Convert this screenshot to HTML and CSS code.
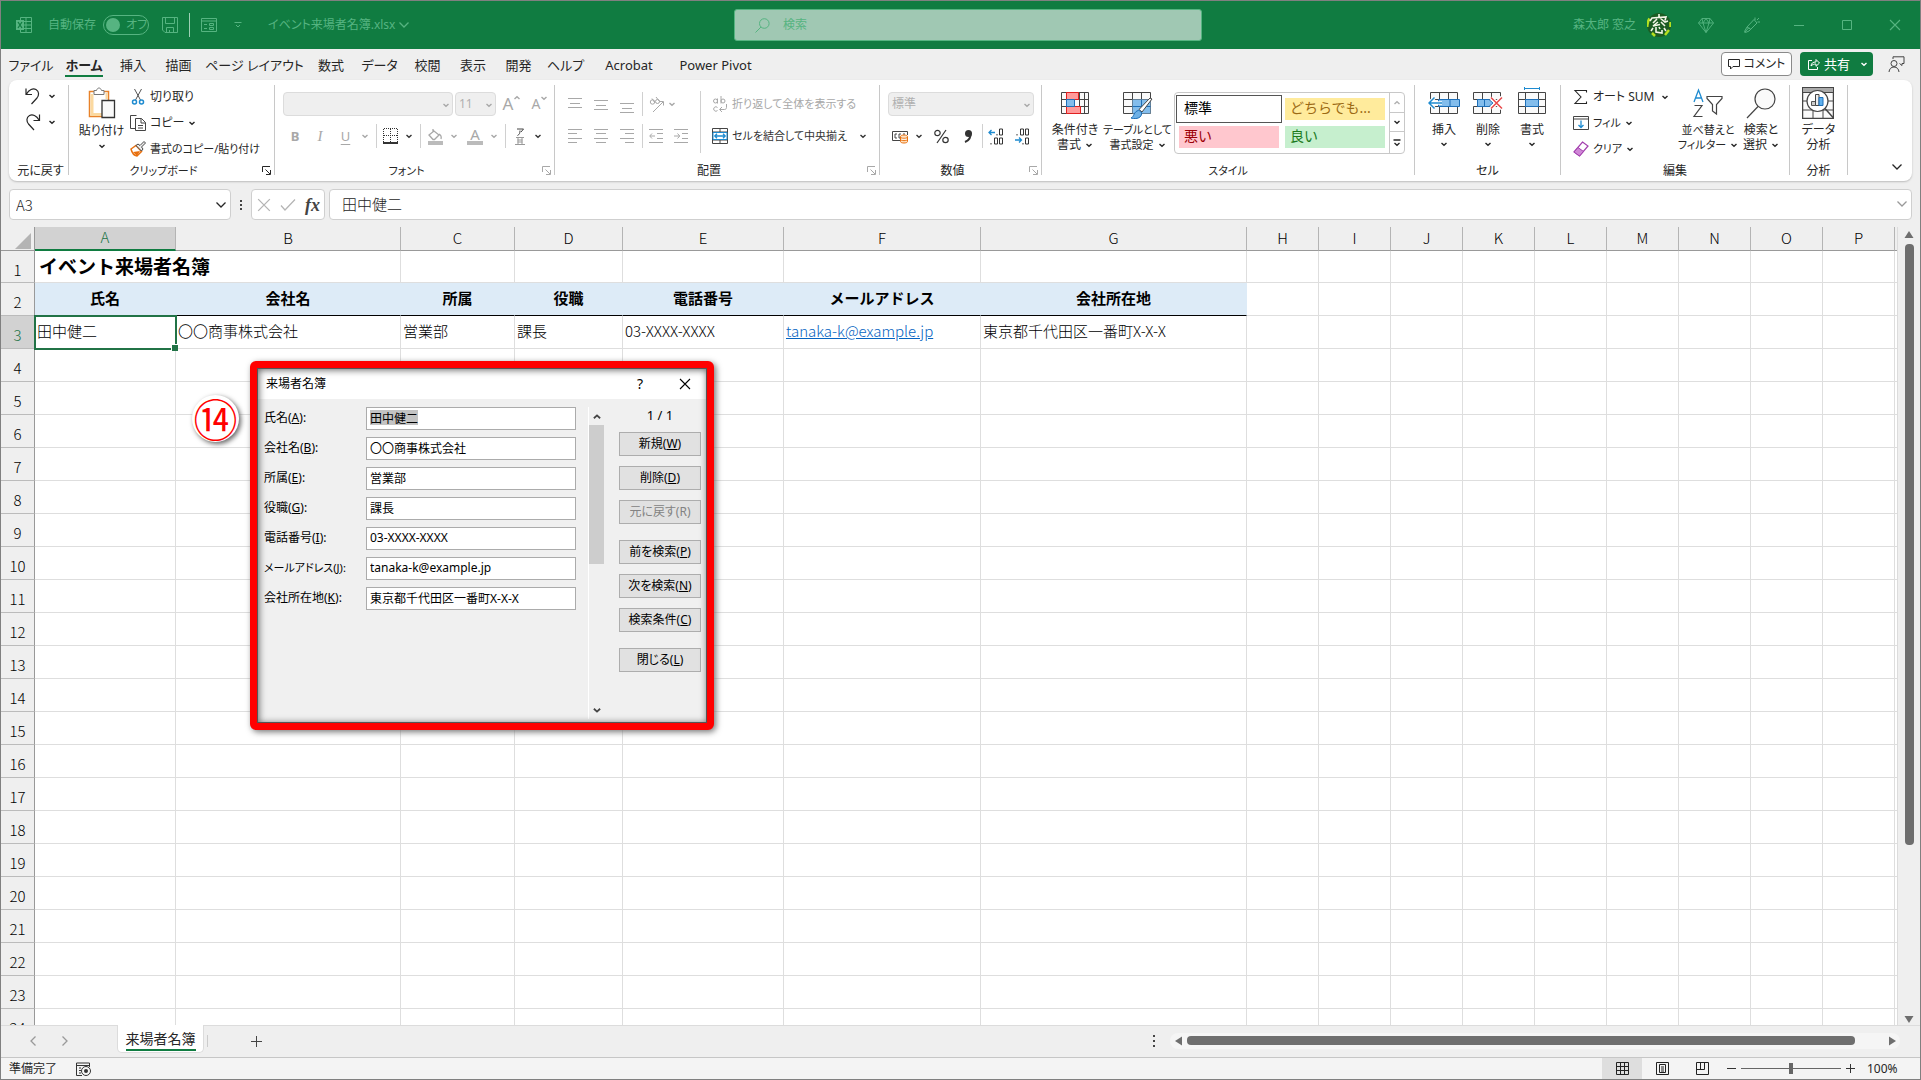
FILE: index.html
```html
<!DOCTYPE html>
<html lang="ja">
<head>
<meta charset="utf-8">
<title>イベント来場者名簿.xlsx - Excel</title>
<link rel="stylesheet" href="styles.css">
</head>
<body>
<svg class="defs" aria-hidden="true">
  <symbol id="chev" viewBox="0 0 8 8"><path d="M1.5 3 4 5.3 6.5 3" fill="none" stroke="currentColor" stroke-width="1.4"/></symbol>
  <symbol id="chev-lg" viewBox="0 0 12 12"><path d="M1.5 3.5 6 8l4.500-4.500" fill="none" stroke="currentColor" stroke-width="1.3"/></symbol>
  <symbol id="launch" viewBox="0 0 9 9"><path d="M.5 6V.5H8M3.500 3.500 8 8M8.500 4v4.500H4" fill="none" stroke="currentColor"/></symbol>
  <symbol id="cross" viewBox="0 0 12 12"><path d="m1 1 10 10M11 1 1 11" fill="none" stroke="currentColor" stroke-width="1.100"/></symbol>
</svg>
<div class="window">
  <header class="titlebar">
    <div class="title-left">
      <svg class="app-icon" width="16" height="16" viewBox="0 0 16 16"><path d="M4.500 3V.5h11v15h-11V13M10 .5v15M4.500 4.500h11M4.500 8h11M4.500 11.500h11" fill="none" stroke="currentColor"/><path d="M0 3h8v10H0z" fill="currentColor"/><path d="m2 5 4 6M6 5l-4 6" stroke="#107c41" stroke-width="1.300"/></svg>
      <label class="autosave">自動保存<span class="toggle"><input type="checkbox"><span>オフ</span></span></label>
      <button class="icon-btn save" aria-label="保存"><svg width="16" height="16" viewBox="0 0 16 16"><path d="M.5.5h15v15H3L.5 13zM3.500.5v6h9v-6M4.500 15.500v-5h7v5M7.500 15.500V13" fill="none" stroke="currentColor"/></svg></button>
      <span class="title-sep"></span>
      <button class="icon-btn form" aria-label="フォーム"><svg width="16" height="14" viewBox="0 0 16 14"><path d="M.5.5h15v13H.5zM.5 3h15M3 6.500h3M3 10.500h3M8.500 5.500h4v2h-4zM8.500 9.500h4v2h-4z" fill="none" stroke="currentColor"/></svg></button>
      <button class="icon-btn qat" aria-label="カスタマイズ"><svg width="8" height="8" viewBox="0 0 8 8"><path d="M.5 1.500h7M2 4l2 2 2-2" fill="none" stroke="currentColor"/></svg></button>
      <button class="doc-name">イベント来場者名簿.xlsx<svg width="12" height="12"><use href="#chev-lg"/></svg></button>
    </div>
    <label class="search"><svg width="15" height="15" viewBox="0 0 15 15"><circle cx="9.300" cy="5.500" r="4.800" fill="none" stroke="currentColor"/><path d="M6 9 .5 14.500" stroke="currentColor" fill="none"/></svg><input type="search" placeholder="検索" aria-label="検索"></label>
    <div class="title-right">
      <span>森太郎 窓之</span>
      <svg class="avatar" width="24" height="24" viewBox="0 0 24 24"><circle cx="12" cy="12" r="12" fill="#1c5c23"/><path d="M2.500 5.500C1 8 0 11 .5 14M5 20l3 3M18 22l4-5M23.500 9v5" stroke="#b4e020" stroke-width="2.500" fill="none"/><path d="M12 1v3M3 8l2-3 14-1-1 3.500M10 6l-4 4M13 5l5 4 3-1M11 9l-5 4 7-1.500M14 9l4 4M6 15l-2 3M9 14v5l6 1v-3M12 14l1 2M17 15l2 3" stroke="#f2f5e6" stroke-width="1.600" fill="none"/></svg>
      <button class="icon-btn gem" aria-label="プレミアム"><svg width="16" height="15" viewBox="0 0 16 15"><path d="M4 .5h8l3.500 4.500L8 14.500.5 5zM.5 5h15M5 5l3 9.500L11 5M4 .5 5 5l3-4.500L11 5l1-4.500" fill="none" stroke="currentColor" stroke-width=".9"/></svg></button>
      <button class="icon-btn pen" aria-label="新機能"><svg width="16" height="16" viewBox="0 0 16 16"><path d="M10 2.500 13 6 5 14l-3.500 1.500H.8L.5 14.500 3 10zM3 10l4 2.500M1 15l4-4.500M11 3V.5M13 3l2-2M13.500 5H16" fill="none" stroke="currentColor" stroke-width="1"/></svg></button>
      <button class="icon-btn cap" aria-label="最小化"><svg width="12" height="12"><path d="M1 6.500h10" stroke="currentColor"/></svg></button>
      <button class="icon-btn cap" aria-label="最大化"><svg width="12" height="12"><path d="M1.500 1.500h9v9h-9z" fill="none" stroke="currentColor"/></svg></button>
      <button class="icon-btn cap" aria-label="閉じる"><svg width="12" height="12"><use href="#cross"/></svg></button>
    </div>
  </header>

  <nav class="tabs">
    <div class="tab-list">
      <button>ファイル</button><button class="active"><span>ホーム</span></button><button>挿入</button><button>描画</button><button>ページ レイアウト</button><button>数式</button><button>データ</button><button>校閲</button><button>表示</button><button>開発</button><button>ヘルプ</button><button>Acrobat</button><button>Power Pivot</button>
    </div>
    <div class="tab-actions">
      <button class="comment"><svg width="12" height="12" viewBox="0 0 12 12"><path d="M.5 1.500h11v7H5L2.500 11V8.500h-2z" fill="none" stroke="currentColor"/></svg>コメント</button>
      <button class="share"><svg width="12" height="12" viewBox="0 0 12 12"><path d="M4 2.500H.5v9h9V9M3 8c.3-3 2-4 5-4V1.500L11.500 5 8 8.300V6C6 6 4.500 6.500 3 8z" fill="none" stroke="currentColor"/></svg>共有<svg class="end" width="8" height="8"><use href="#chev"/></svg></button>
      <button class="people" aria-label="Teams"><svg width="17" height="17" viewBox="0 0 17 17"><circle cx="6" cy="7.500" r="3" fill="none" stroke="currentColor"/><path d="M1 16c.3-3 2-5 5-5s4.700 2 5 5M5 3V.8h11v6.700h-2v2l-2.500-2" fill="none" stroke="currentColor"/></svg></button>
    </div>
  </nav>

  <section class="ribbon">
    <div class="group g-undo">
      <div class="body undo">
        <button aria-label="元に戻す"><svg width="16" height="18" viewBox="0 0 16 18"><path d="M1 1.500v6h6M1.500 7C4 2.500 8 1 11 2.500c3.500 2 3 6 1 8.500L6.500 17" fill="none" stroke="currentColor" stroke-width="1.200"/></svg><svg width="8" height="8"><use href="#chev"/></svg></button>
        <button aria-label="やり直し"><svg width="16" height="18" viewBox="0 0 16 18"><path d="M14.500 1.500v6h-6M14 7C11.500 2.500 7.500 1 4.500 2.500c-3.500 2-3 6-1 8.500L9 17" fill="none" stroke="currentColor" stroke-width="1.200"/></svg><svg width="8" height="8"><use href="#chev"/></svg></button>
      </div>
      <div class="caption">元に戻す</div>
    </div>
    <div class="group g-clip">
      <div class="body clip">
        <button class="big"><svg width="28" height="32" viewBox="0 0 28 32"><path d="M1.500 4.500h19v25h-19z" fill="#fff" stroke="#e8822a" stroke-width="1.500"/><path d="M4 7v20.500h10" fill="none" stroke="#fbd9a0" stroke-width="3"/><path d="M18.500 6v6" stroke="#fbd9a0" stroke-width="2"/><path d="M6 7.500v-4h2.500C9 1.800 10 1 11 1s2 .8 2.500 2.500H16v4z" fill="#fff" stroke="#777"/><path d="M14 13.500h12.500v17H14z" fill="#fafafa" stroke="#333" stroke-width="1.300"/></svg>貼り付け<svg width="8" height="8"><use href="#chev"/></svg></button>
        <div class="stack">
          <button><svg width="16" height="18" viewBox="0 0 16 18"><path d="M4.500 1l6 11M11.500 1l-6 11" stroke="#555" fill="none"/><circle cx="4.500" cy="14" r="2" fill="none" stroke="#1e8bd0" stroke-width="1.500"/><circle cx="11.500" cy="14" r="2" fill="none" stroke="#1e8bd0" stroke-width="1.500"/></svg>切り取り</button>
          <button class="dd"><svg width="16" height="16" viewBox="0 0 16 16"><path d="M5 13.500H.5V.5h6M5.500 3.500h6l4 4v8h-10zM11 3.500V8h4.500M8 10.500h5M8 13h5" fill="none" stroke="#444"/></svg>コピー<svg class="end" width="8" height="8"><use href="#chev"/></svg></button>
          <button class="snug"><svg width="16" height="16" viewBox="0 0 16 16"><path d="m1 8 5-3.500 5.500 6L7 15c-3-.5-5-3-6-7z" fill="#fff" stroke="#e8700f" stroke-width="1.500"/><path d="m3 11 7-1-3 5z" fill="#e8700f"/><path d="m6 4.500 2-1.500 2 1.500 4-4 1.500 1.500-4 4 1.500 2-1.500 2z" fill="#eee" stroke="#444"/></svg>書式のコピー/貼り付け</button>
        </div>
      </div>
      <div class="caption snug">クリップボード</div><button class="launcher" aria-label="クリップボードの設定"><svg width="9" height="9"><use href="#launch"/></svg></button>
    </div>
    <div class="group g-font off">
      <div class="body rows">
        <div class="row font1">
          <span class="combo"><select aria-label="フォント名" disabled><option></option></select><svg width="8" height="8"><use href="#chev"/></svg></span>
          <span class="combo"><select aria-label="サイズ" disabled><option>11</option></select><svg width="8" height="8"><use href="#chev"/></svg></span>
          <button class="lt-big" aria-label="拡大">A<svg class="up" width="8" height="8"><use href="#chev"/></svg></button><button class="lt-mid" aria-label="縮小">A<svg width="8" height="8"><use href="#chev"/></svg></button>
        </div>
        <div class="row font2">
          <button class="b">B</button><button class="i">I</button><button class="u">U</button><svg width="8" height="8"><use href="#chev"/></svg><i></i>
          <button class="on" aria-label="罫線"><svg width="15" height="16" viewBox="0 0 15 16"><path d="M.5 1v13M14.500 1v13M7.500 1v13M1 .5h13M1 7.500h13" fill="none" stroke="currentColor" stroke-dasharray="1 1"/><path d="M0 15h15" stroke="currentColor" stroke-width="2"/></svg></button><svg class="on" width="8" height="8"><use href="#chev"/></svg><i></i>
          <button aria-label="塗りつぶし"><svg width="16" height="17" viewBox="0 0 16 17"><path d="M6 1v4M2 7l5-4 5 4-4.500 4.500H6zM12 6c2 1 2.500 3 2 5" fill="none" stroke="currentColor" stroke-width="1.300"/><path d="M1 13h15v4H1z" fill="#bbb"/></svg></button><svg width="8" height="8"><use href="#chev"/></svg>
          <button class="fc" aria-label="フォントの色">A</button><svg width="8" height="8"><use href="#chev"/></svg><i></i>
          <button class="ruby on" aria-label="ふりがな"><svg width="10" height="17" viewBox="0 0 10 17"><path d="M2 1h6.500L6 4M5 2.500C5 5 4.500 6.500 2.500 7.500" fill="none" stroke="#444"/><path d="M1 9.500h8M2.500 12h5M2.500 14h5M0 16.500h10M3 9v7M7 9v7" fill="none" stroke="#999"/></svg></button><svg class="on" width="8" height="8"><use href="#chev"/></svg>
        </div>
      </div>
      <div class="caption snug">フォント</div><button class="launcher" aria-label="フォントの設定"><svg width="9" height="9"><use href="#launch"/></svg></button>
    </div>
    <div class="group g-align off">
      <div class="body align">
        <div class="rows">
          <div class="row al">
            <button aria-label="上揃え"><svg width="14" height="18"><path d="M0 3.500h14M2 8.500h10M0 12.500h14" stroke="currentColor"/></svg></button>
            <button aria-label="上下中央揃え"><svg width="14" height="18"><path d="M0 5.500h14M2 10.500h10M0 14.500h14" stroke="currentColor"/></svg></button>
            <button aria-label="下揃え"><svg width="14" height="18"><path d="M0 8.500h14M2 13.500h10M0 17.500h14" stroke="currentColor"/></svg></button><i></i>
            <button aria-label="方向"><svg width="17" height="17" viewBox="0 0 17 17"><circle cx="4.500" cy="6" r="2.200" fill="none" stroke="currentColor"/><path d="M4 2.500 7 7M8 1l4 5M5 16 15 6M11.500 5.500h4v4" fill="none" stroke="currentColor"/><circle cx="9.500" cy="5.500" r="2" fill="none" stroke="currentColor"/></svg></button><svg width="8" height="8"><use href="#chev"/></svg>
          </div>
          <div class="row al">
            <button aria-label="左揃え"><svg width="14" height="14"><path d="M0 .5h14M0 4.500h9M0 9.500h14M0 13.500h9" stroke="currentColor"/></svg></button>
            <button aria-label="中央揃え"><svg width="14" height="14"><path d="M0 .5h14M2 4.500h10M0 9.500h14M2 13.500h10" stroke="currentColor"/></svg></button>
            <button aria-label="右揃え"><svg width="14" height="14"><path d="M0 .5h14M5 4.500h9M0 9.500h14M5 13.500h9" stroke="currentColor"/></svg></button><i></i>
            <button aria-label="インデントを減らす"><svg width="14" height="14"><path d="M0 .5h14M8 4.500h6M8 9.500h6M0 13.500h14M6 7H1M3 4.500.7 7 3 9.500" fill="none" stroke="currentColor"/></svg></button>
            <button aria-label="インデントを増やす"><svg width="14" height="14"><path d="M0 .5h14M8 4.500h6M8 9.500h6M0 13.500h14M0 7h5M3.500 4.500 5.800 7 3.500 9.500" fill="none" stroke="currentColor"/></svg></button>
          </div>
        </div>
        <div class="rows wraps">
          <button class="row snug"><svg width="16" height="17" viewBox="0 0 16 17"><circle cx="3.500" cy="5" r="2" fill="none" stroke="currentColor"/><path d="M5.500 2.500v5M9 0v7.500" stroke="currentColor"/><circle cx="11" cy="5" r="2" fill="none" stroke="currentColor"/><path d="M5.500 11.500a2.200 2.200 0 1 0 0 3M14.500 8v3.500c0 1-.7 2-2 2H8M10 11l-2.500 2.500L10 16" fill="none" stroke="currentColor"/></svg>折り返して全体を表示する</button>
          <button class="row snug on"><svg width="16" height="16" viewBox="0 0 16 16"><path d="M.5.5h15v15H.5zM.5 4h15M.5 12h15M8 .5V4M8 12v3.500" fill="none" stroke="#444"/><path d="M1 4.500h14v7H1z" fill="#fff" stroke="#1e8bd0"/><path d="M3 8h10M5 5.800 2.800 8 5 10.200M11 5.800 13.200 8 11 10.200" fill="none" stroke="#1e8bd0" stroke-width="1.300"/></svg>セルを結合して中央揃え<svg class="end" width="8" height="8"><use href="#chev"/></svg></button>
        </div>
      </div>
      <div class="caption">配置</div><button class="launcher" aria-label="配置の設定"><svg width="9" height="9"><use href="#launch"/></svg></button>
    </div>
    <div class="group g-num off">
      <div class="body rows">
        <div class="row"><span class="combo wide"><select aria-label="表示形式" disabled><option>標準</option></select><svg width="8" height="8"><use href="#chev"/></svg></span></div>
        <div class="row num2 on">
          <button aria-label="通貨"><svg width="17" height="15" viewBox="0 0 17 15"><path d="M8 11.500H.5v-9h15V6M5 5H3v4h2M8.500 9H7V5h2M11 5h2" fill="none" stroke="#444"/><path d="M8.500 7.500c0-2 7-2 7 0v5c0 2-7 2-7 0zM8.500 8c0 1.500 7 1.500 7 0M8.500 10.500c0 1.500 7 1.500 7 0" fill="#fde3c4" stroke="#e8700f"/></svg></button><svg width="8" height="8"><use href="#chev"/></svg>
          <button aria-label="パーセント"><svg width="15" height="15" viewBox="0 0 15 15"><circle cx="3.500" cy="4" r="2.700" fill="none" stroke="currentColor" stroke-width="1.200"/><circle cx="11.500" cy="11" r="2.700" fill="none" stroke="currentColor" stroke-width="1.200"/><path d="M12 1 3 14" stroke="currentColor" stroke-width="1.200"/></svg></button>
          <button aria-label="桁区切り"><svg width="9" height="13" viewBox="0 0 9 13"><circle cx="4.500" cy="3.500" r="3.500" fill="currentColor"/><path d="M6.500 3C7 8 5 10.500 1 12" fill="none" stroke="currentColor" stroke-width="2"/></svg></button><i></i>
          <button aria-label="小数点以下を増やす"><svg width="16" height="17" viewBox="0 0 16 17"><path d="M7 4.500H1M3.500 2 1 4.500 3.500 7" fill="none" stroke="#1e8bd0" stroke-width="1.300"/><path d="M11.500 1h3v6h-3zM6.500 10h3v6h-3zM11.500 10h3v6h-3zM3 15v1.500M9 6v1.500" fill="none" stroke="currentColor"/></svg></button>
          <button aria-label="小数点以下を減らす"><svg width="16" height="17" viewBox="0 0 16 17"><path d="M1 12h6M5 9.500 7.500 12 5 14.500" fill="none" stroke="#1e8bd0" stroke-width="1.300"/><path d="M6.500 1h3v6h-3zM11.500 1h3v6h-3zM11.500 10h3v6h-3zM3 6v1.500M9 15v1.500" fill="none" stroke="currentColor"/></svg></button>
        </div>
      </div>
      <div class="caption">数値</div><button class="launcher" aria-label="表示形式の設定"><svg width="9" height="9"><use href="#launch"/></svg></button>
    </div>
    <div class="group g-style">
      <div class="body styles">
        <button class="big"><svg width="28" height="32" viewBox="0 0 28 32"><path d="M.5 5.500h27v21H.5zM5.500 5.500v21M18.500 5.500v21M23.500 5.500v21M.5 12.500h27M.5 19.500h27" fill="#fafafa" stroke="#444"/><path d="M5.500 5.500h12v7h-12zM5.500 19.500h14v7h-14z" fill="#ff9a9a" stroke="#e02020"/><path d="M5.500 12.500h8v7h-8z" fill="#83bdec" stroke="#1e6fb8"/></svg><span>条件付き<br>書式<svg width="8" height="8"><use href="#chev"/></svg></span></button>
        <button class="big"><svg width="30" height="32" viewBox="0 0 30 32"><path d="M.5 5.500h27v21H.5zM9.500 5.500v21M18.500 5.500v21M.5 12.500h27M.5 19.500h27" fill="#fafafa" stroke="#444"/><path d="M9.500 12.500h18v14h-18z" fill="#83bdec"/><path d="M9.500 19.500h18M18.500 12.500v14" stroke="#1e6fb8"/><path d="m29 12-10 13-3-2.500L27 11z" fill="#fff" stroke="#444"/><path d="M8 31c3-1 3-7 7.500-7.500 3.500.5 4 4 1.500 6.500-2 1.800-6 2-9 1z" fill="#6db0e6" stroke="#1e6fb8"/></svg><span class="snug">テーブルとして<br>書式設定<svg width="8" height="8"><use href="#chev"/></svg></span></button>
        <div class="gallery">
          <div class="swatches"><button class="sw normal">標準</button><button class="sw neutral">どちらでも...</button><button class="sw bad">悪い</button><button class="sw good">良い</button></div>
          <div class="gal-scroll"><button class="dim" aria-label="前の行"><svg class="up" width="8" height="8"><use href="#chev"/></svg></button><button aria-label="次の行"><svg width="8" height="8"><use href="#chev"/></svg></button><button aria-label="その他"><svg width="8" height="8" viewBox="0 0 8 8"><path d="M.5 1h7M1.500 4 4 6.300 6.500 4" fill="none" stroke="currentColor" stroke-width="1.300"/></svg></button></div>
        </div>
      </div>
      <div class="caption snug">スタイル</div>
    </div>
    <div class="group g-cell">
      <div class="body cells">
        <button class="big"><svg width="32" height="32" viewBox="0 0 32 32"><path d="M2.500 5.500h27v21h-27zM11.500 5.500v21M20.500 5.500v21M2.500 12.500h27M2.500 19.500h27" fill="#fafafa" stroke="#444"/><path d="M10.500 12.500h21v7h-21zM22 12.500v7" fill="#83bdec" stroke="#1e6fb8"/><path d="M14 16H2M6.500 10.500 1 16l5.500 5.500" fill="none" stroke="#fff" stroke-width="3.500"/><path d="M14 16H2M6.500 10.500 1 16l5.500 5.500" fill="none" stroke="#1e8bd0" stroke-width="1.500"/></svg>挿入<svg width="8" height="8"><use href="#chev"/></svg></button>
        <button class="big"><svg width="30" height="32" viewBox="0 0 30 32"><path d="M.5 12.500v-7h27v7zM.5 26.500v-7h27v7zM9.500 5.500v7M18.500 5.500v7M9.500 19.500v7M18.500 19.500v7" fill="#fafafa" stroke="#444"/><path d="M4.500 12.500H16l4 3.500-4 3.500H4.500zM11.500 12.500v7" fill="#83bdec" stroke="#1e6fb8"/><path d="m18 10.500 11 11M29 10.500l-11 11" stroke="#fff" stroke-width="4"/><path d="m18 10.500 11 11M29 10.500l-11 11" stroke="#e8484a" stroke-width="1.500"/></svg>削除<svg width="8" height="8"><use href="#chev"/></svg></button>
        <button class="big"><svg width="28" height="32" viewBox="0 0 28 32"><path d="M.5 5.500h27v21H.5zM7.500 5.500v21M20.500 5.500v21M.5 12.500h27M.5 19.500h27" fill="#fafafa" stroke="#444"/><path d="M7.500 12.500h13v7h-13z" fill="#83bdec" stroke="#1e6fb8"/><path d="M6.500 0v3M21.500 0v3M6.500 1.500h15" stroke="#1e8bd0"/></svg>書式<svg width="8" height="8"><use href="#chev"/></svg></button>
      </div>
      <div class="caption">セル</div>
    </div>
    <div class="group g-edit">
      <div class="body edit">
        <div class="stack">
          <button class="dd"><svg width="16" height="16" viewBox="0 0 16 16"><path d="M13.500 3.500v-2H2L8 8l-6 6.500h11.500v-2" fill="none" stroke="currentColor" stroke-width="1.100"/></svg>オート SUM<svg class="end" width="8" height="8"><use href="#chev"/></svg></button>
          <button class="snug"><svg width="16" height="14" viewBox="0 0 16 14"><path d="M.5.5h15v13H.5zM.5 3h15" fill="none" stroke="#444"/><path d="M8 4.500v7M5.500 9 8 11.500 10.500 9" fill="none" stroke="#1e8bd0" stroke-width="1.300"/></svg>フィル<svg width="8" height="8"><use href="#chev"/></svg></button>
          <button class="snug"><svg width="16" height="16" viewBox="0 0 16 16"><path d="m9.500 1 5.500 4-8.500 10L1 11z" fill="#fff" stroke="#a33fae" stroke-width="1.200"/><path d="m5 6.500 5.500 4-4 4.500L1 11z" fill="#cf86d6" stroke="#a33fae"/></svg>クリア<svg width="8" height="8"><use href="#chev"/></svg></button>
        </div>
        <button class="big"><svg width="32" height="32" viewBox="0 0 32 32"><path d="m2 15 4.500-12L11 15M3.500 11h6" fill="none" stroke="#1e8bd0" stroke-width="1.300"/><path d="M2.500 18.500H10L2 29.500h8.500M15 9.500h15v2l-5.500 6V27l-4-3v-6.500L15 11.500z" fill="none" stroke="#444" stroke-width="1.200"/></svg><span class="snug">並べ替えと<br>フィルター<svg width="8" height="8"><use href="#chev"/></svg></span></button>
        <button class="big"><svg width="30" height="32" viewBox="0 0 30 32"><circle cx="19" cy="12" r="10" fill="#fafafa" stroke="#444" stroke-width="1.200"/><path d="M12 19.500 1 31" stroke="#444" stroke-width="1.200"/></svg><span>検索と<br>選択<svg width="8" height="8"><use href="#chev"/></svg></span></button>
      </div>
      <div class="caption">編集</div>
    </div>
    <div class="group g-data">
      <div class="body data">
        <button class="big"><svg width="32" height="32" viewBox="0 0 32 32"><path d="M.5.5h31v31H.5z" fill="#fafafa" stroke="#444" stroke-width="1.500"/><path d="M1 1h30v4H1z" fill="#aaa"/><path d="M.5 5.500h31M.5 14h31M.5 23h31M11 23v8M21 23v8" stroke="#444"/><circle cx="15.500" cy="14" r="10.500" fill="#fff" stroke="#444" stroke-width="1.200"/><path d="m23 21.500 8.500 9.500" stroke="#444" stroke-width="1.500"/><path d="M9.500 14.500h4v4h-4z" fill="#ccc" stroke="#555"/><path d="M13.500 7.500h3.500v11h-3.500z" fill="#eee" stroke="#444"/><path d="M17 10.500h4v8h-4z" fill="#5fb0ee" stroke="#1e6fb8"/></svg><span>データ<br>分析</span></button>
      </div>
      <div class="caption">分析</div>
    </div>
    <button class="collapse" aria-label="リボンを折りたたむ"><svg width="12" height="12"><use href="#chev-lg"/></svg></button>
  </section>

  <div class="formula-row">
    <div class="name-box"><input value="A3" aria-label="名前ボックス"><svg width="12" height="12"><use href="#chev-lg"/></svg></div>
    <span class="dots"><i></i><i></i><i></i></span>
    <div class="fx"><svg width="14" height="14" viewBox="0 0 12 12"><use href="#cross"/></svg><svg width="16" height="14" viewBox="0 0 16 14"><path d="m1 7.500 4 4.500L15 1.500" fill="none" stroke="currentColor" stroke-width="1.200"/></svg><button aria-label="関数の挿入">fx</button></div>
    <div class="formula"><input value="田中健二" aria-label="数式バー"><svg width="12" height="12"><use href="#chev-lg"/></svg></div>
  </div>

  <main class="sheet-area">
    <div class="sheet">
      <table>
        <colgroup><col class="c-head"><col class="c-a"><col class="c-b"><col class="c-c"><col class="c-d"><col class="c-e"><col class="c-f"><col class="c-g"><col span="9" class="c-std"><col class="c-std"></colgroup>
        <thead><tr><th class="corner"><svg width="16" height="16"><path d="M16 0v16H0z" fill="#b4b4b4"/></svg></th><th class="sel">A</th><th>B</th><th>C</th><th>D</th><th>E</th><th>F</th><th>G</th><th>H</th><th>I</th><th>J</th><th>K</th><th>L</th><th>M</th><th>N</th><th>O</th><th>P</th><th></th></tr></thead>
        <tbody id="rows">
          <tr><th>1</th><td class="title" colspan="2">イベント来場者名簿</td><td></td><td></td><td></td><td></td><td></td><td></td><td></td><td></td><td></td><td></td><td></td><td></td><td></td><td></td><td></td></tr>
          <tr class="heads"><th>2</th><td>氏名</td><td>会社名</td><td>所属</td><td>役職</td><td>電話番号</td><td>メールアドレス</td><td>会社所在地</td><td></td><td></td><td></td><td></td><td></td><td></td><td></td><td></td><td></td><td></td></tr>
          <tr><th class="sel">3</th><td class="cursor">田中健二</td><td>〇〇商事株式会社</td><td>営業部</td><td>課長</td><td>03-XXXX-XXXX</td><td><a href="mailto:tanaka-k@example.jp">tanaka-k@example.jp</a></td><td>東京都千代田区一番町X-X-X</td><td></td><td></td><td></td><td></td><td></td><td></td><td></td><td></td><td></td><td></td></tr>
        </tbody>
      </table>
    </div>
    <div class="vscroll"><svg width="10" height="8"><path d="M5 0l4.500 7h-9z" fill="#6e6e6e"/></svg><div class="vthumb"></div><div class="vrest"></div><svg width="10" height="8"><path d="M5 8 .5 1h9z" fill="#6e6e6e"/></svg></div>

    <form class="dialog">
      <div class="dlg-title"><span>来場者名簿</span><button type="button" class="help" aria-label="ヘルプ">?</button><button type="button" aria-label="閉じる"><svg width="12" height="12"><use href="#cross"/></svg></button></div>
      <div class="dlg-body">
        <div class="fields">
          <label for="fa"><span>氏名(<u>A</u>):</span></label><input id="fa" class="picked" value="田中健二">
          <label for="fb"><span>会社名(<u>B</u>):</span></label><input id="fb" value="〇〇商事株式会社">
          <label for="fe"><span>所属(<u>E</u>):</span></label><input id="fe" value="営業部">
          <label for="fg"><span>役職(<u>G</u>):</span></label><input id="fg" value="課長">
          <label for="fi"><span>電話番号(<u>I</u>):</span></label><input id="fi" value="03-XXXX-XXXX">
          <label for="fj" class="snug"><span>メールアドレス(<u>J</u>):</span></label><input id="fj" value="tanaka-k@example.jp">
          <label for="fk"><span>会社所在地(<u>K</u>):</span></label><input id="fk" value="東京都千代田区一番町X-X-X">
        </div>
        <div class="dlg-scroll"><svg class="up" width="10" height="10"><use href="#chev"/></svg><div class="dlg-thumb"></div><svg class="down" width="10" height="10"><use href="#chev"/></svg></div>
        <div class="dlg-buttons">
          <span class="count">1 / 1</span>
          <div class="btns"><button type="button">新規(<u>W</u>)</button><button type="button">削除(<u>D</u>)</button><button type="button" disabled>元に戻す(R)</button></div>
          <div class="btns"><button type="button">前を検索(<u>P</u>)</button><button type="button">次を検索(<u>N</u>)</button><button type="button">検索条件(<u>C</u>)</button></div>
          <div class="btns"><button type="button">閉じる(<u>L</u>)</button></div>
        </div>
      </div>
    </form>
    <div class="step">⑭</div>
  </main>

  <div class="sheet-tabs">
    <button class="arrow" aria-label="前のシート"><svg class="left" width="12" height="12"><use href="#chev-lg"/></svg></button>
    <button class="arrow" aria-label="次のシート"><svg class="right" width="12" height="12"><use href="#chev-lg"/></svg></button>
    <button class="sheet-tab"><span>来場者名簿</span></button>
    <button class="add" aria-label="新しいシート"><svg width="12" height="12"><path d="M6.500 1v11M1 6.500h11" stroke="#444"/></svg></button>
    <span class="dots"><i></i><i></i><i></i></span>
    <div class="hscroll"><svg width="8" height="10"><path d="M0 5l7-4.500v9z" fill="#6e6e6e"/></svg><div class="hthumb"></div><div class="hrest"></div><svg width="8" height="10"><path d="M8 5 1 .5v9z" fill="#6e6e6e"/></svg></div>
  </div>
  <footer class="status">
    <span>準備完了</span>
    <svg class="macro" width="15" height="14" viewBox="0 0 15 14"><path d="M6 13.500H.5V1h13v4M.5 3.500h13M3 6h2M3 8.500h2M3 11h2" fill="none" stroke="#333"/><circle cx="10" cy="9" r="4.500" fill="#f4f4f4" stroke="#333"/><circle cx="10" cy="9" r="2" fill="#333"/></svg>
    <div class="views">
      <button class="current" aria-label="標準"><svg width="13" height="13"><path d="M.5.5h12v12H.5zM4.500 0v13M8.500 0v13M0 4.500h13M0 8.500h13" fill="none" stroke="#222"/></svg></button>
      <button aria-label="ページ レイアウト"><svg width="13" height="13"><path d="M.5.5h12v12H.5zM3.500 2.500h6v8h-6zM5 5h3M5 7h3M5 9h3" fill="none" stroke="#222"/></svg></button>
      <button aria-label="改ページ プレビュー"><svg width="13" height="13"><path d="M.5.5h12v12H.5zM.5 7.500h8V.5M4.500.5v7" fill="none" stroke="#222"/></svg></button>
    </div>
    <div class="zoom"><button aria-label="縮小"><svg width="9" height="9"><path d="M0 4.500h9" stroke="#333"/></svg></button><input type="range" min="0" max="100" value="50" aria-label="ズーム"><button aria-label="拡大"><svg width="9" height="9"><path d="M0 4.500h9M4.500 0v9" stroke="#333"/></svg></button></div>
    <span class="pct">100%</span>
  </footer>
</div>
<script src="script.js"></script>
</body>
</html>
```
FILE: styles.css
```css
* { box-sizing: border-box; }
body { margin: 0; font-family: "Noto Sans", "Noto Sans CJK JP", sans-serif; font-size: 12px; line-height: 16px; color: #262626; font-feature-settings: "palt"; }
button, input, select { font: inherit; font-feature-settings: inherit; color: inherit; margin: 0; padding: 0; border: 0; background: none; }
button { cursor: pointer; white-space: nowrap; }
input { min-width: 0; outline: 0; }
svg { flex: none; display: block; }
.defs { position: absolute; width: 0; height: 0; }
.snug { font-size: 11px; }
.window { height: 100vh; display: flex; flex-direction: column; border: 1px solid #808080; background: #efefef; overflow: hidden; }

/* title bar */
.titlebar { flex: none; height: 48px; display: grid; grid-template-columns: 1fr 468px 1fr; align-items: center; padding-left: 15px; background: #107c41; color: #56b481; }
.title-left, .title-right { display: flex; align-items: center; }
.autosave { display: flex; align-items: center; gap: 7px; margin-left: 16px; }
.toggle { display: flex; align-items: center; gap: 6px; width: 46px; height: 20px; padding-left: 2px; border: 1px solid currentColor; border-radius: 10px; white-space: nowrap; }
.toggle input { flex: none; appearance: none; width: 14px; height: 14px; border-radius: 50%; background: currentColor; }
.save { margin-left: 13px; }
.title-sep { width: 1px; height: 24px; margin: 0 11px; background: #9fd0b5; }
.qat { margin-left: 17px; }
.doc-name { display: flex; align-items: center; gap: 3px; margin-left: 26px; }
.search { display: flex; align-items: center; gap: 13px; height: 32px; padding-left: 20px; background: #a0c8b3; border: 1px solid #56b481; border-radius: 3px; }
.search input { flex: 1; }
.search input::placeholder { color: #56b481; opacity: 1; }
.title-right { justify-content: flex-end; padding-right: 19px; }
.avatar { margin: 0 27px 0 11px; }
.pen { margin: 0 33px 0 30px; }
.cap + .cap { margin-left: 36px; }

/* ribbon tabs */
.tabs { flex: none; height: 31px; display: flex; justify-content: space-between; padding: 3px 15px 3px 3px; font-size: 13px; }
.tab-list { display: grid; grid-template-columns: 54px 52px 46px 45px 107px 46px 51px 45px 46px 45px 49px 78px 95px; align-items: end; }
.tab-list button { height: 25px; line-height: 26px; }
.active span { display: inline-block; font-weight: 700; height: 25px; box-shadow: inset 0 -2px #107c41; vertical-align: top; }
.tab-actions { display: flex; gap: 8px; font-size: 12px; align-items: flex-start; }
.tab-actions button { height: 24px; display: flex; align-items: center; gap: 4px; border-radius: 4px; }
.comment { width: 71px; justify-content: center; border: 1px solid #8a8a8a; background: #fff; }
.tab-actions .share { width: 73px; padding: 0 5px 0 8px; background: #107c41; color: #fff; font-size: 13px; }
.end { margin-left: auto; }
.tab-actions .people { margin-left: 7px; color: #444; }

/* ribbon */
.ribbon { flex: none; display: flex; height: 101px; margin: 0 8px 8px; background: #fff; border-radius: 8px; box-shadow: 0 1px 2px #bbb; padding: 5px 0 6px; }
.group { position: relative; display: flex; flex-direction: column; justify-content: space-between; border-right: 1px solid #c8c8c8; }
.g-undo { width: 60px; } .g-clip { width: 206px; } .g-font { width: 280px; } .g-align { width: 325px; } .g-num { width: 162px; }
.g-style { width: 373px; } .g-cell { width: 146px; } .g-edit { width: 229px; } .g-data { width: 58px; }
.caption { text-align: center; height: 12px; line-height: 16px; }
.g-clip .caption, .g-font .caption, .g-align .caption, .g-num .caption { padding-right: 16px; }
.g-undo .caption { padding-left: 4px; }
.body { display: flex; }
.launcher { position: absolute; right: 3px; bottom: 0; }
.off .body, .off .launcher { color: #a8a8a8; }
.off .on, .on { color: #333; }
.big { display: flex; flex-direction: column; align-items: center; line-height: 15px; padding-top: 2px; gap: 3px; }
.big span svg { display: inline-block; margin-left: 4px; }
.stack { display: flex; flex-direction: column; gap: 10px; }
.stack button { display: flex; align-items: center; gap: 4px; height: 16px; }
.undo { flex-direction: column; gap: 8px; padding: 2px 0 0 16px; }
.undo button { display: flex; align-items: center; gap: 7px; }
.clip .big { width: 61px; padding-left: 4px; gap: 4px; }
.clip .stack, .edit .stack { padding-top: 4px; }
.clip .dd { width: 65px; }
.rows { flex-direction: column; display: flex; gap: 6px; padding: 6px 0 0; }
.row { display: grid; align-items: center; justify-items: center; height: 26px; }
.row i { width: 1px; height: 24px; background: #d0d0d0; }
.g-font .rows, .g-num .rows { padding-left: 8px; }
.font1 { grid-template-columns: 170px 41px 28px 24px; column-gap: 2px; justify-items: start; }
.combo { position: relative; display: flex; align-items: center; width: 100%; height: 24px; background: #efefef; border: 1px solid #dcdcdc; border-radius: 4px; }
.combo select { appearance: none; width: 100%; height: 22px; padding-left: 3px; opacity: 1; color: #b0b0b0; }
.combo svg { position: absolute; right: 2px; top: 8px; }
.combo.wide { width: 146px; justify-self: start; }
.lt-big { font-size: 17px; } .lt-mid { font-size: 14px; }
.font1 button { justify-self: center; display: flex; line-height: 20px; }
.font2 { grid-template-columns: 24px 26px 25px 14px 8px 21px 16px 7px 22px 16px 26px 12px 10px 20px 16px; font-size: 13px; }
.b { font-weight: 700; } .i { font-style: italic; font-family: "Liberation Serif", serif; font-size: 15px; } .u { text-decoration: underline; text-underline-offset: 3px; }
.fc { width: 16px; height: 18px; line-height: 14px; font-size: 15px; border-bottom: 4px solid #bbb; }
.align .rows:first-child { width: 145px; padding-left: 7px; }
.align .wraps { margin-top: 6px; padding: 0 0 0 11px; border-left: 1px solid #d0d0d0; height: 62px; }
.wraps .row { display: flex; gap: 4px; width: 155px; }
.al { grid-template-columns: 26px 26px 26px 4px 24px 26px; }
.al svg:last-child { justify-self: start; }
.al button:last-child { justify-self: center; }
.num2 { grid-template-columns: 24px 14px 30px 24px 4px 24px 28px; }
.styles { padding-left: 7px; }
.styles .big:first-child { width: 52px; } .styles .big:nth-child(2) { width: 73px; }
.gallery { display: flex; width: 231px; height: 62px; margin-top: 7px; border: 1px solid #c8c8c8; border-radius: 4px; }
.swatches { flex: 1; display: grid; grid-template-columns: 106px 106px; grid-auto-rows: 28px; padding: 2px 0 0 1px; font-size: 14px; font-feature-settings: normal; }
.sw { border: 3px solid #fff; padding: 0 0 2px 5px; text-align: left; line-height: 18px; }
.normal { border: 1px solid #555; color: #000; padding-left: 7px; }
.neutral { background: #ffeb9c; color: #9c6a14; overflow: hidden; } .bad { background: #ffc7ce; color: #9c0006; } .good { background: #c6efce; color: #1b7a1b; }
.gal-scroll { width: 15px; display: grid; grid-template-rows: 19px 19px 1fr; border-left: 1px solid #c8c8c8; }
.gal-scroll button { display: flex; justify-content: center; align-items: center; border-top: 1px solid #c8c8c8; }
.gal-scroll .dim { border: 0; color: #b0b0b0; }
.up { transform: rotate(180deg); }
.cells { padding-left: 7px; } .cells .big { width: 44px; }
.edit { padding-left: 12px; } .edit .stack { width: 96px; } .edit .big:nth-child(2) { width: 78px; } .edit .big:nth-child(3) { width: 28px; }
.data { justify-content: center; }
.collapse { align-self: flex-end; margin-left: auto; padding: 0 9px 2px 0; }

/* formula bar */
.formula-row { flex: none; display: flex; align-items: center; height: 31px; margin: 0 8px 7px; font-family: "Noto Sans CJK JP", sans-serif; font-size: 15px; font-weight: 300; font-feature-settings: normal; }
.name-box, .fx, .formula { display: flex; align-items: center; height: 31px; background: #fff; border: 1px solid #cfcfcf; border-radius: 4px; }
.name-box { width: 222px; padding: 0 3px 0 6px; justify-content: space-between; }
.dots { width: 20px; display: flex; flex-direction: column; align-items: center; gap: 2px; }
.dots i { width: 2px; height: 2px; background: #444; }
.fx { width: 74px; gap: 9px; padding-left: 5px; color: #b4b4b4; }
.fx button { font: italic 700 18px/20px "Liberation Serif", serif; color: #444; }
.formula { flex: 1; margin-left: 4px; padding: 0 3px 2px 12px; }
.formula input { flex: 1; }
.formula svg { color: #999; }

/* worksheet */
.sheet-area { flex: 1; min-height: 0; position: relative; display: flex; }
.sheet { flex: 1; overflow: hidden; border-right: 1px solid #dcdcdc; }
table { table-layout: fixed; width: 1966px; border-collapse: separate; border-spacing: 0; font-family: "Noto Sans CJK JP", sans-serif; font-size: 15px; line-height: 20px; font-weight: 300; font-feature-settings: normal; color: #000; background: #fff; }
.c-head { width: 34px; } .c-a { width: 141px; } .c-b { width: 225px; } .c-c { width: 114px; } .c-d { width: 108px; } .c-e { width: 161px; } .c-f { width: 197px; } .c-g { width: 266px; } .c-std { width: 72px; }
th { font-weight: 300; padding: 0; background: #efefef; border-right: 1px solid #b4b4b4; }
thead th { height: 24px; border-bottom: 1px solid #999; padding-bottom: 2px; }
tbody th { border-right-color: #999; border-bottom: 1px solid #bbb; padding-top: 6px; }
td { height: 33px; padding: 0 2px 2px; border-right: 1px solid #dedede; border-bottom: 1px solid #dedede; white-space: nowrap; overflow: hidden; }
tbody tr:first-child td { height: 32px; }
th.sel { background: #d2d2d2; color: #217346; }
thead .sel { border-bottom: 2px solid #107c41; }
.corner { padding: 4px 0 0 14px; border-right-color: #999; }
.title { font-size: 19px; font-weight: 700; padding-left: 4px; }
.heads td:nth-child(-n+8) { background: #ddebf7; border-right-color: #ddebf7; border-bottom-color: #000; font-weight: 700; text-align: center; }
.cursor { position: relative; outline: 2px solid #217346; outline-offset: -1px; overflow: visible; }
.cursor::after { content: ""; position: absolute; right: -3px; bottom: -3px; width: 6px; height: 6px; background: #217346; border: solid #fff; border-width: 1px 0 0 1px; }
td a { color: #0563c1; }
.vscroll { width: 22px; display: flex; flex-direction: column; align-items: center; gap: 5px; padding: 4px 0 2px; }
.vthumb { flex: 601; width: 9px; border-radius: 4px; background: #6e6e6e; }
.vrest { flex: 160; }

/* data form */
.dialog { position: absolute; left: 249px; top: 134px; width: 464px; height: 369px; display: flex; flex-direction: column; border: 7px solid #f00; border-radius: 6px; background: #f0f0f0; color: #000; box-shadow: 2px 2px 6px #777; }
.dialog::after { content: ""; position: absolute; inset: 0; border: 1px solid #555; box-shadow: inset 1px 1px 7px #666; pointer-events: none; }
.dlg-title { display: flex; align-items: center; height: 31px; padding: 0 16px 0 9px; background: #fff; font-feature-settings: normal; }
.dlg-title span { flex: 1; }
.help { font-size: 14px; margin-right: 36px; }
.dlg-body { flex: 1; display: flex; padding: 8px 6px 4px 7px; }
.fields { display: grid; grid-template-columns: 102px 210px; grid-auto-rows: 23px; row-gap: 7px; align-content: start; align-items: center; white-space: nowrap; }
.fields input { height: 23px; padding: 0 3px 2px; background: #fff; border: 1px solid #ababab; }
.fields label { padding-bottom: 2px; }
.fields .picked { background: linear-gradient(#c3c3c3, #c3c3c3) 3px 2px / 48px 15px no-repeat #fff; }
.dlg-scroll { width: 16px; margin-left: 12px; display: flex; flex-direction: column; align-items: center; border-left: 1px solid #fff; color: #444; padding: 5px 0 4px; }
.dlg-thumb { width: 15px; height: 139px; margin: 3px 0 auto; background: #cdcdcd; }
.dlg-buttons { margin-left: auto; width: 82px; }
.count { display: block; text-align: center; font-size: 13px; height: 25px; }
.btns { display: grid; gap: 10px; margin-bottom: 16px; }
.btns button { height: 24px; background: #e1e1e1; border: 1px solid #adadad; }
.btns button:disabled { color: #838383; }
.step { position: absolute; left: 191px; top: 168px; width: 47px; height: 47px; border-radius: 50%; background: #fff; box-shadow: 2px 2px 5px #666; color: #f00; font: 400 44px/47px "Noto Sans CJK JP", sans-serif; display: flex; justify-content: center; }

/* sheet tabs and status */
.sheet-tabs { flex: none; display: flex; height: 32px; border-top: 1px solid #dcdcdc; padding: 0 20px 2px 0; align-items: center; }
.arrow { color: #999; margin-left: 26px; width: 12px; }
.arrow + .arrow { margin-left: 20px; }
.left { transform: rotate(90deg); } .right { transform: rotate(-90deg); }
.sheet-tab { align-self: flex-start; margin-left: 46px; height: 28px; width: 87px; background: #fff; border: 1px solid #dcdcdc; border-top: 0; border-radius: 0 0 5px 5px; font-size: 14px; margin-top: -1px; }
.sheet-tab span { display: inline-block; height: 24px; line-height: 24px; border-bottom: 2px solid #107c41; }
.add { margin-left: 3px; padding-left: 42px; border-left: 1px solid #ccc; }
.sheet-tabs .dots { margin-left: auto; margin-right: 6px; gap: 3px; }
.hscroll { width: 730px; height: 16px; display: flex; align-items: center; gap: 4px; padding: 0 4px 0 5px; background: #f5f5f5; border-radius: 8px; }
.hthumb { flex: 667; height: 9px; border-radius: 4px; background: #6e6e6e; }
.hrest { flex: 25; }
.status { flex: none; display: flex; align-items: center; height: 22px; padding: 0 19px 0 8px; background: #f4f4f4; border-top: 1px solid #c6c6c6; }
.macro { margin-left: 19px; }
.views { display: flex; margin-left: auto; height: 21px; }
.views button { width: 40px; display: flex; align-items: center; justify-content: center; }
.current { background: #dedede; }
.zoom { display: flex; align-items: center; gap: 5px; margin-left: 5px; }
.zoom input { appearance: none; width: 100px; height: 12px; background: linear-gradient(#666, #666) center / 100% 1px no-repeat; }
.zoom input::-webkit-slider-thumb { appearance: none; width: 4px; height: 11px; background: #666; }
.pct { margin-left: 12px; width: 34px; }
```
FILE: script.js
```js
const body = document.getElementById("rows");
for (let n = 4; n <= 24; n++) {
  const tr = body.insertRow();
  const th = document.createElement("th");
  th.textContent = n;
  tr.append(th);
  for (let c = 0; c < 17; c++) tr.insertCell();
}
```
